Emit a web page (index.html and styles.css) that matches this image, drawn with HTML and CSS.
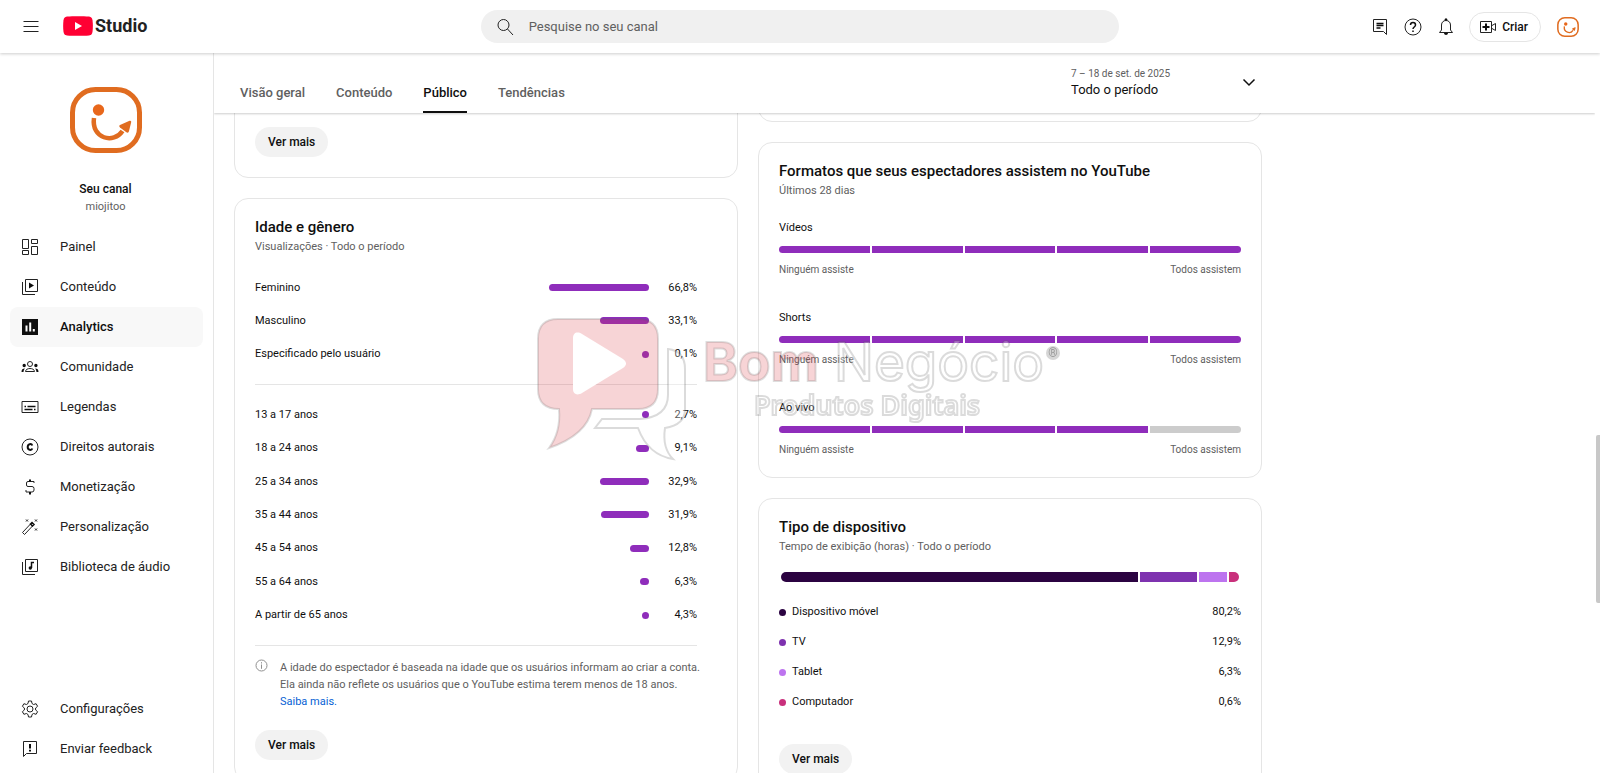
FILE: index.html
```html
<!DOCTYPE html>
<html lang="pt-BR">
<head>
  <meta charset="UTF-8" />
  <meta name="viewport" content="width=device-width, initial-scale=1">
  <title>Studio - Analytics</title>
  <link rel="stylesheet" href="styles.css">
</head>
<body>

  <header class="topbar">
    <div class="topbar-left">
      <button class="icon-btn" aria-label="Menu">
        <svg class="icon" viewBox="0 0 20 20"><path d="M2.500 4.500h15M2.500 9.500h15M2.500 14.500h15"/></svg>
      </button>
      <a class="brand" href="#">
        <svg width="30" height="20" viewBox="0 0 30 20">
          <path fill="#ff0033" d="M4 .6C10 0 20 0 26 .6c2.300.3 3.200 1.600 3.500 3.700.5 3.700.5 7.700 0 11.400-.3 2.100-1.200 3.400-3.500 3.700-6 .6-16 .6-22 0C1.700 19.100.8 17.800.5 15.700 0 12 0 8 .5 4.300.8 2.200 1.700.9 4 .6z"/>
          <path fill="#fff" d="M12 6v8l7-4z"/>
        </svg>
        <span>Studio</span>
      </a>
    </div>

    <form class="search">
      <svg class="icon" viewBox="0 0 20 20"><circle cx="8.500" cy="8" r="5.500"/><path d="M12.500 12l5.500 6"/></svg>
      <input type="search" placeholder="Pesquise no seu canal" aria-label="Pesquise no seu canal">
    </form>

    <div class="topbar-right">
      <button class="icon-btn" aria-label="Novidades">
        <svg class="icon" viewBox="0 0 20 20"><path d="M3.500 2.500h13v15l-3-3h-10z"/><path class="bold" d="M6.500 6.500h7M6.500 8.500h7M6.500 11h4"/></svg>
      </button>
      <button class="icon-btn" aria-label="Ajuda">
        <svg class="icon" viewBox="0 0 20 20"><circle cx="10" cy="10" r="8"/><path class="bold" d="M7.500 8c0-3.300 5-3.300 5 0 0 2-2.500 2-2.500 4M10 13.500v1.500"/></svg>
      </button>
      <button class="icon-btn" aria-label="Notificações">
        <svg class="icon" viewBox="0 0 20 20"><path d="M3.500 15.500h13l-2-2.500V8c0-6-9-6-9 0v5z"/><path class="solid" d="M8.500 3.500c0-3 3-3 3 0zM8 16h4c0 2.500-4 2.500-4 0z"/></svg>
      </button>
      <button class="create-btn">
        <svg class="icon" viewBox="0 0 20 20"><path d="M2.500 4.500h11v11h-11z"/><path d="M14 8.500l3.500-2v7l-3.500-2"/><path class="heavy" d="M8 6.500v7M4.500 10h7"/></svg>
        Criar
      </button>
      <button class="icon-btn avatar-btn" aria-label="Conta">
        <svg width="22" height="20" viewBox="0 0 72 66"><use href="#channel-logo"/></svg>
      </button>
    </div>
  </header>

  <div class="layout">
    <aside class="sidebar">
      <div class="channel">
        <svg width="72" height="66" viewBox="0 0 72 66">
          <g id="channel-logo">
            <rect x="2.500" y="2.500" width="67" height="61" rx="23" fill="none" stroke="#e06c20" stroke-width="5"/>
            <circle cx="28.500" cy="23" r="5.700" fill="#e8671b"/>
            <path d="M24 31c-3 21 20 26 28.500 13" fill="none" stroke="#e06c20" stroke-width="4.500"/>
            <path d="M50 38l9-4c2-.5 2.500 0 2 2l-2 8c-.5 2-1.500 2-3 1l-6-4.500c-1-1-1-2 0-2.500z" fill="#e06c20"/>
          </g>
        </svg>
        <strong>Seu canal</strong>
        <span>miojitoo</span>
      </div>

      <nav class="nav">
        <a href="#">
          <svg class="icon" viewBox="0 0 20 20"><path d="M2.500 2.500h6v9h-6zM2.500 13.500h6v4h-6zM11.500 2.500h6v4h-6zM11.500 9.500h6v8h-6z"/></svg>
          Painel
        </a>
        <a href="#">
          <svg class="icon" viewBox="0 0 20 20"><path d="M5.500 2.500h12v12h-12zM2.500 5v12.500H15"/><path class="solid" d="M9 5.500v6l5-3z"/></svg>
          Conteúdo
        </a>
        <a href="#" class="active">
          <svg class="icon" viewBox="0 0 20 20"><path class="solid" d="M2 2h16v16H2z"/><path class="light" d="M6.500 8.500v6M10.200 5.500v9M13.800 12v2.500"/></svg>
          Analytics
        </a>
        <a href="#">
          <svg class="icon" viewBox="0 0 20 20"><circle cx="10" cy="7" r="2.500"/><path d="M5.500 14.500c0-4 9-4 9 0z"/><path class="solid" d="M2.500 8.500a1.700 1.700 0 1 1 3.400 0 1.700 1.700 0 0 1-3.400 0zM14.200 8.500a1.700 1.700 0 1 1 3.400 0 1.700 1.700 0 0 1-3.400 0zM1.500 15c0-2.500 1-3.500 3.500-3.500-1 1-1.300 2-1.500 3.500zM18.500 15c0-2.500-1-3.500-3.500-3.500 1 1 1.300 2 1.500 3.500z"/></svg>
          Comunidade
        </a>
        <a href="#">
          <svg class="icon" viewBox="0 0 20 20"><path d="M2 4.500h16v11H2z"/><path class="bold" d="M4.500 9.500H6M7.500 9.500h8M4.500 12.500h8M14 12.500h1.500"/></svg>
          Legendas
        </a>
        <a href="#">
          <svg class="icon" viewBox="0 0 20 20"><circle cx="10" cy="10" r="8"/><path class="heavy" d="M12.300 8.500c-.8-2.200-4.600-1.900-4.600 1.500s3.800 3.700 4.600 1.500"/></svg>
          Direitos autorais
        </a>
        <a href="#">
          <svg class="icon" viewBox="0 0 20 20"><path d="M14 6V4.500H8Q6.500 4.500 6.500 6v2Q6.500 9.500 8 9.500h4q2 0 2 2v1.500q0 2-2 2H6V13"/><path class="heavy" d="M10 2.500v2M10 15v2.500"/></svg>
          Monetização
        </a>
        <a href="#">
          <svg class="icon" viewBox="0 0 20 20"><path d="M2.500 15.500l8-8.500 2 2-8 8.500z"/><path class="bold" d="M10.500 7l1.500-1.500 2 2L12.500 9z"/><path d="M6 2.500l2 2M8 2.500l-2 2M15 2.500l2 2M17 2.500l-2 2M15 11.500l2 2M17 11.500l-2 2"/></svg>
          Personalização
        </a>
        <a href="#">
          <svg class="icon" viewBox="0 0 20 20"><path d="M5.500 2.500h12v12h-12zM2.500 5v12.500H15"/><path class="bold" d="M11.500 11V5.500H14"/><circle class="solid" cx="10.300" cy="11" r="1.700"/></svg>
          Biblioteca de áudio
        </a>
      </nav>

      <nav class="nav nav-bottom">
        <a href="#">
          <svg class="icon" viewBox="0 0 20 20"><circle cx="10" cy="10" r="3"/><path d="M8.500 2h3l.5 2.500 1.600 1 2.500-.8 1.500 2.600-2 1.700v2l2 1.700-1.500 2.600-2.500-.8-1.600 1-.5 2.500h-3L8 15.500l-1.600-1-2.500.8-1.500-2.600 2-1.700V9l-2-1.700 1.500-2.600 2.500.8 1.600-1z"/></svg>
          Configurações
        </a>
        <a href="#">
          <svg class="icon" viewBox="0 0 20 20"><path d="M3.500 17.500v-15h13v12h-10z"/><path class="heavy" d="M10 5v4.500M10 10.800v1.700"/></svg>
          Enviar feedback
        </a>
      </nav>
    </aside>

    <main class="main">
      <div class="tabbar">
        <div class="tabbar-inner">
          <nav class="tabs">
            <a href="#">Visão geral</a>
            <a href="#">Conteúdo</a>
            <a href="#" class="active">Público</a>
            <a href="#">Tendências</a>
          </nav>
          <button class="period">
            <span class="period-text">
              <small>7 – 18 de set. de 2025</small>
              <span>Todo o período</span>
            </span>
            <svg class="icon" viewBox="0 0 20 20"><path class="bold" d="M4.500 7.500l5.500 5.500 5.500-5.500"/></svg>
          </button>
        </div>
      </div>

      <div class="cards">
        <div class="column">
          <section class="card card-first">
            <button class="more-btn">Ver mais</button>
          </section>

          <section class="card card-age">
            <h2>Idade e gênero</h2>
            <p class="subtitle">Visualizações · Todo o período</p>

            <table class="bars bars-gender">
              <tr><th>Feminino</th><td class="bar"><div style="width: 100%"></div></td><td>66,8%</td></tr>
              <tr><th>Masculino</th><td class="bar"><div style="width: 49%"></div></td><td>33,1%</td></tr>
              <tr><th>Especificado pelo usuário</th><td class="bar"><div style="width: 0%"></div></td><td>0,1%</td></tr>
            </table>
            <hr>
            <table class="bars bars-age">
              <tr><th>13 a 17 anos</th><td class="bar"><div style="width: 4%"></div></td><td>2,7%</td></tr>
              <tr><th>18 a 24 anos</th><td class="bar"><div style="width: 13%"></div></td><td>9,1%</td></tr>
              <tr><th>25 a 34 anos</th><td class="bar"><div style="width: 49%"></div></td><td>32,9%</td></tr>
              <tr><th>35 a 44 anos</th><td class="bar"><div style="width: 48%"></div></td><td>31,9%</td></tr>
              <tr><th>45 a 54 anos</th><td class="bar"><div style="width: 19%"></div></td><td>12,8%</td></tr>
              <tr><th>55 a 64 anos</th><td class="bar"><div style="width: 9%"></div></td><td>6,3%</td></tr>
              <tr><th>A partir de 65 anos</th><td class="bar"><div style="width: 6%"></div></td><td>4,3%</td></tr>
            </table>
            <hr>
            <div class="note">
              <svg width="13" height="13" viewBox="0 0 13 13"><circle cx="6.500" cy="6.500" r="5.500"/><path d="M6.500 3.200v1.300M6.500 5.500v4.300"/></svg>
              <p>A idade do espectador é baseada na idade que os usuários informam ao criar a conta. Ela ainda não reflete os usuários que o YouTube estima terem menos de 18 anos.<br><a href="#">Saiba mais.</a></p>
            </div>
            <button class="more-btn">Ver mais</button>
          </section>
        </div>

        <div class="column">
          <section class="card card-first"></section>

          <section class="card card-formats">
            <h2>Formatos que seus espectadores assistem no YouTube</h2>
            <p class="subtitle">Últimos 28 dias</p>
            <div class="formats">
              <div class="format">
                <h3>Vídeos</h3>
                <div class="segments"><i></i><i></i><i></i><i></i><i></i></div>
                <div class="scale"><span>Ninguém assiste</span><span>Todos assistem</span></div>
              </div>
              <div class="format">
                <h3>Shorts</h3>
                <div class="segments"><i></i><i></i><i></i><i></i><i></i></div>
                <div class="scale"><span>Ninguém assiste</span><span>Todos assistem</span></div>
              </div>
              <div class="format">
                <h3>Ao vivo</h3>
                <div class="segments"><i></i><i></i><i></i><i></i><i class="off"></i></div>
                <div class="scale"><span>Ninguém assiste</span><span>Todos assistem</span></div>
              </div>
            </div>
          </section>

          <section class="card">
            <h2>Tipo de dispositivo</h2>
            <p class="subtitle">Tempo de exibição (horas) · Todo o período</p>
            <div class="stack">
              <i class="mobile" style="flex-grow: 358"></i>
              <i class="tv" style="flex-grow: 57"></i>
              <i class="tablet" style="flex-grow: 28"></i>
              <i class="computer" style="flex-grow: 10"></i>
            </div>
            <ul class="devices">
              <li><i class="mobile"></i>Dispositivo móvel<span>80,2%</span></li>
              <li><i class="tv"></i>TV<span>12,9%</span></li>
              <li><i class="tablet"></i>Tablet<span>6,3%</span></li>
              <li><i class="computer"></i>Computador<span>0,6%</span></li>
            </ul>
            <button class="more-btn">Ver mais</button>
          </section>
        </div>
      </div>
    </main>

    <div class="scrollbar"><div class="thumb"></div></div>
  </div>

  <!-- Seller watermark -->
  <div class="watermark">
    <svg width="528" height="146" viewBox="0 0 528 146">
      <path class="wm-red" d="M22 2h80q20 0 20 20v50q0 20-20 20H56q-5 26-43 39 12-16 10-39Q2 92 2 72V22Q2 2 22 2z"/>
      <path class="wm-play" d="M37 21v51c0 5 4 7 9 4l41-25c4-3 4-6 0-9L46 17c-5-3-9-1-9 4z"/>
      <path class="wm-line" d="M132 32q17 2 17 20v40q0 16-20 19-3 20 8 31-25-4-35-31H59l7-9h38q28-2 28-24z"/>
      <text class="wm-red wm-name" x="167" y="64" font-weight="700">Bom</text>
      <text class="wm-line wm-name" x="298" y="64">Negócio</text>
      <text class="wm-line wm-sub" x="218" y="98">Produtos Digitais</text>
      <circle class="wm-dot" cx="517" cy="36" r="7"/>
      <text class="wm-reg" x="517" y="40">®</text>
    </svg>
  </div>

</body>
</html>
```
FILE: styles.css
```css
* { box-sizing: border-box; }
body {
  margin: 0;
  height: 100vh;
  display: flex;
  flex-direction: column;
  overflow: hidden;
  background: #fff;
  color: #0f0f0f;
  font-family: Roboto, sans-serif;
  font-size: 11px;
  line-height: 16px;
}
h2, h3, p, ul { margin: 0; padding: 0; }
a { color: inherit; text-decoration: none; }
button { font: inherit; color: inherit; border: none; background: none; padding: 0; cursor: pointer; }

/* icons */
.icon { width: 20px; height: 20px; flex: none; fill: none; stroke: #222; stroke-width: 1; }
.icon .bold { stroke-width: 1.5; stroke: #0f0f0f; }
.icon .heavy { stroke-width: 2; stroke: #0f0f0f; }
.icon .solid { fill: #0f0f0f; stroke: none; }
.icon .light { stroke: #fff; stroke-width: 2; }
.icon-btn { display: flex; }

/* top bar */
.topbar {
  position: relative;
  z-index: 3;
  height: 53px;
  flex: none;
  display: flex;
  align-items: center;
  justify-content: space-between;
  padding: 0 21px;
  background: #fff;
  box-shadow: 0 1px 3px rgba(0,0,0,0.2);
}
.topbar-left { flex: 1; display: flex; align-items: center; gap: 22px; }
.brand { display: flex; align-items: center; gap: 2px; margin-bottom: 2px; font-size: 18px; font-weight: 700; line-height: 20px; color: #222; }
.search {
  width: 41%;
  height: 33px;
  display: flex;
  align-items: center;
  gap: 14px;
  padding: 0 14px;
  border-radius: 17px;
  background: #f0f0f0;
}
.search input { flex: 1; border: none; outline: none; background: none; padding: 0; font: inherit; font-size: 13px; }
.search input::placeholder { color: #606060; }
.topbar-right { flex: 1; display: flex; align-items: center; justify-content: flex-end; gap: 13px; }
.create-btn {
  height: 30px;
  display: flex;
  align-items: center;
  gap: 4px;
  padding: 0 12px 0 8px;
  border: 1px solid #e5e5e5;
  border-radius: 15px;
  font-size: 12px;
  font-weight: 500;
}
.avatar-btn { margin-left: 3px; }

/* sidebar */
.layout { flex: 1; min-height: 0; display: flex; }
.sidebar {
  width: 214px;
  flex: none;
  display: flex;
  flex-direction: column;
  padding: 34px 10px 4px;
  border-right: 1px solid #e5e5e5;
}
.channel { display: flex; flex-direction: column; align-items: center; margin-bottom: 12px; padding-right: 2px; color: #606060; }
.channel strong { margin: 28px 0 2px; font-size: 12px; font-weight: 500; color: #0f0f0f; }
.nav a {
  height: 40px;
  display: flex;
  align-items: center;
  gap: 20px;
  padding-left: 10px;
  border-radius: 8px;
  font-size: 13px;
  color: #222;
}
.nav a.active { background: #f8f8f8; font-weight: 500; color: #0f0f0f; }
.nav-bottom { margin-top: auto; }

/* tabs and period */
.main { flex: 1; min-width: 0; overflow: hidden; }
.tabbar {
  position: relative;
  z-index: 2;
  height: 60px;
  background: #fff;
  box-shadow: 0 1px 2px rgba(0,0,0,0.2);
}
.tabbar-inner { height: 100%; max-width: 1048px; display: flex; justify-content: space-between; padding-left: 26px; }
.tabs { display: flex; gap: 31px; }
.tabs a {
  display: flex;
  align-items: center;
  padding-top: 21px;
  border-bottom: 2px solid transparent;
  font-size: 13px;
  font-weight: 500;
  color: #606060;
}
.tabs a.active { color: #0f0f0f; border-color: #0f0f0f; }
.period { width: 191px; display: flex; align-items: center; justify-content: space-between; padding-bottom: 2px; text-align: left; font-size: 13px; }
.period-text { display: flex; flex-direction: column; }
.period small { font-size: 10px; color: #606060; }
.period .icon { margin-right: 3px; }

/* cards, pulled up so the first ones slide under the tab bar */
.cards { max-width: 1068px; display: grid; grid-template-columns: 1fr 1fr; gap: 20px; padding: 0 20px; margin-top: -32px; }
.column { display: flex; flex-direction: column; gap: 20px; min-width: 0; }
.card { padding: 20px; border: 1px solid #e5e5e5; border-radius: 14px; }
.card-first { padding-top: 45px; min-height: 41px; }
.card-first:empty { padding: 0; }
.card-age { padding-right: 40px; }
.card-formats { padding-bottom: 19px; }
.card h2 { font-size: 15px; font-weight: 500; line-height: 16px; }
.subtitle { margin-top: 4px; color: #606060; }
.more-btn {
  height: 30px;
  padding: 0 13px;
  border-radius: 15px;
  background: #f2f2f2;
  font-size: 12px;
  font-weight: 500;
}

/* age and gender */
.bars { width: 100%; border-collapse: collapse; }
.bars-gender { height: 100px; margin-top: 16px; }
.bars-age { height: 234px; }
.bars th, .bars td { padding: 0; font-weight: 400; text-align: left; }
.bars td { width: 48px; text-align: right; }
.bars .bar { width: 100px; }
.bar div { height: 7px; min-width: 7px; margin-left: auto; border-radius: 4px; background: #8f2dbb; }
.card hr { margin: 13px 0; border: none; border-top: 1px solid #e5e5e5; }
.note { display: flex; align-items: flex-start; gap: 12px; margin: 0 -12px 20px 0; color: #606060; line-height: 17px; }
.note svg { flex: none; fill: none; stroke: #909090; }
.note a { color: #065fd4; }

/* watched formats */
.formats { display: flex; flex-direction: column; gap: 32px; margin-top: 21px; }
.format h3 { font-size: 11px; font-weight: 400; }
.segments { display: flex; gap: 2px; height: 7px; margin: 10px 0 9px; border-radius: 4px; overflow: hidden; }
.segments i { flex: 1; background: #8f2dbb; }
.segments .off { background: #ccc; }
.scale { display: flex; justify-content: space-between; font-size: 10px; color: #606060; }

/* devices */
.stack { display: flex; gap: 2px; height: 10px; margin: 17px 2px 15px; border-radius: 5px; overflow: hidden; }
.stack i { flex-basis: 0; }
.mobile { background: #2b0341; }
.tv { background: #7e32af; }
.tablet { background: #bd74ef; }
.computer { background: #c9307c; }
.devices { list-style: none; margin-bottom: 27px; }
.devices li { height: 30px; display: flex; align-items: center; gap: 6px; }
.devices i { width: 7px; height: 7px; border-radius: 50%; }
.devices span { margin-left: auto; }

/* scrollbar */
.scrollbar { position: relative; width: 5px; flex: none; }
.thumb { position: absolute; right: 0; top: 53%; width: 4px; height: 168px; border-radius: 2px 0 0 2px; background: #c8c8c8; }

.watermark { position: fixed; inset: 0; z-index: 4; display: grid; place-items: center; padding-top: 6px; pointer-events: none; }
.wm-red { fill: rgba(220,60,70,0.22); stroke: rgba(90,90,90,0.2); stroke-width: 2; }
.wm-play { fill: #fff; }
.wm-line { fill: rgba(255,255,255,0.3); stroke: rgba(90,90,90,0.22); stroke-width: 2; }
.wm-name { font-family: Inter, sans-serif; font-size: 53px; }
.wm-sub { font-family: "Noto Sans", sans-serif; font-size: 27px; font-weight: 600; }
.wm-dot { fill: rgba(90,90,90,0.25); }
.wm-reg { font-size: 12px; fill: #999; text-anchor: middle; }
```
